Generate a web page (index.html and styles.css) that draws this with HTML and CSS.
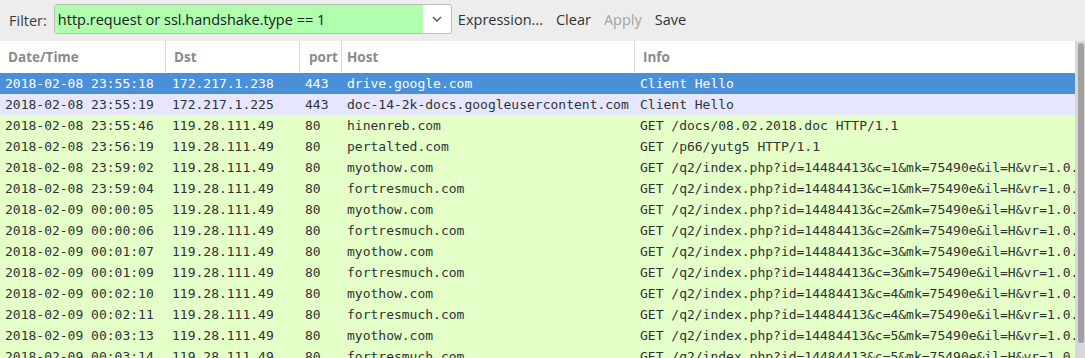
FILE: index.html
```html
<!DOCTYPE html>
<html lang="en">
  <head>
    <meta charset="UTF-8" />
    <title>Packet list</title>
    <link rel="stylesheet" href="styles.css">
  </head>
  <body>
    <div class="toolbar">
      <span class="filter-label">Filter:</span>
      <div class="filter-box">
        <input class="filter-input" type="text" value="http.request or ssl.handshake.type == 1" />
        <span class="filter-drop">
          <svg width="12" height="8" viewBox="0 0 12 8"><path d="M2 2 L6 6 L10 2" fill="none" stroke="#555" stroke-width="1.4"/></svg>
        </span>
      </div>
      <span class="tool-btn">Expression...</span>
      <span class="tool-btn">Clear</span>
      <span class="tool-btn disabled">Apply</span>
      <span class="tool-btn">Save</span>
    </div>

    <div class="list-wrap">
      <div class="packet-list">
        <div class="row head">
          <div class="c-time">Date/Time</div>
          <div class="c-dst">Dst</div>
          <div class="c-port">port</div>
          <div class="c-host">Host</div>
          <div class="c-info">Info</div>
        </div>
        <div id="rows"></div>
      </div>
      <div class="scrollbar"><div class="thumb"></div></div>
    </div>

    <script>
      // packet rows: [time, dst, port, host, info, kind]
      const q = (c) => `GET /q2/index.php?id=14484413&c=${c}&mk=75490e&il=H&vr=1.0.2`;
      const packets = [
        ["2018-02-08 23:55:18", "172.217.1.238", "443", "drive.google.com", "Client Hello", "selected"],
        ["2018-02-08 23:55:19", "172.217.1.225", "443", "doc-14-2k-docs.googleusercontent.com", "Client Hello", "ssl"],
        ["2018-02-08 23:55:46", "119.28.111.49", "80", "hinenreb.com", "GET /docs/08.02.2018.doc HTTP/1.1", "http"],
        ["2018-02-08 23:56:19", "119.28.111.49", "80", "pertalted.com", "GET /p66/yutg5 HTTP/1.1", "http"],
        ["2018-02-08 23:59:02", "119.28.111.49", "80", "myothow.com", q(1), "http"],
        ["2018-02-08 23:59:04", "119.28.111.49", "80", "fortresmuch.com", q(1), "http"],
        ["2018-02-09 00:00:05", "119.28.111.49", "80", "myothow.com", q(2), "http"],
        ["2018-02-09 00:00:06", "119.28.111.49", "80", "fortresmuch.com", q(2), "http"],
        ["2018-02-09 00:01:07", "119.28.111.49", "80", "myothow.com", q(3), "http"],
        ["2018-02-09 00:01:09", "119.28.111.49", "80", "fortresmuch.com", q(3), "http"],
        ["2018-02-09 00:02:10", "119.28.111.49", "80", "myothow.com", q(4), "http"],
        ["2018-02-09 00:02:11", "119.28.111.49", "80", "fortresmuch.com", q(4), "http"],
        ["2018-02-09 00:03:13", "119.28.111.49", "80", "myothow.com", q(5), "http"],
        ["2018-02-09 00:03:14", "119.28.111.49", "80", "fortresmuch.com", q(5), "http"]
      ];
      const cols = ["c-time", "c-dst", "c-port", "c-host", "c-info"];
      const rowsDiv = document.getElementById("rows");
      packets.forEach((p) => {
        const row = document.createElement("div");
        row.className = `row ${p[5]}`;
        cols.forEach((cls, i) => {
          const cell = document.createElement("div");
          cell.className = cls;
          cell.textContent = p[i];
          row.appendChild(cell);
        });
        rowsDiv.appendChild(row);
      });
    </script>
  </body>
</html>
```

FILE: styles.css
```css
body {
  margin: 0;
  background-color: #ededed;
  font-family: "Open Sans", "Noto Sans", sans-serif;
  color: #2e3436;
  overflow: hidden;
}

.toolbar {
  height: 41px;
  display: flex;
  align-items: center;
  padding-left: 9px;
  box-sizing: border-box;
  font-size: 14.5px;
}
.filter-label {
  margin-right: 7px;
  color: #3c3c3c;
}
.filter-box {
  display: flex;
  width: 398px;
  height: 30px;
  margin-top: -3px;
  border: 1px solid #bcbcb8;
  border-radius: 3px;
  box-sizing: border-box;
  overflow: hidden;
  background-color: #fff;
}
.filter-input {
  flex: 1;
  border: none;
  outline: none;
  background-color: #afffaf;
  font-family: "Open Sans", "Noto Sans", sans-serif;
  font-size: 14.5px;
  color: #1a1a1a;
  padding: 0 0 0 3px;
  margin: 0;
}
.filter-drop {
  width: 28px;
  display: flex;
  align-items: center;
  justify-content: center;
}
.tool-btn {
  margin-left: 6px;
  margin-right: 7px;
  margin-top: -3px;
  color: #2e3436;
}
.tool-btn:first-of-type {
  margin-left: 7px;
}
.tool-btn.disabled {
  color: #a3a3a3;
}

.list-wrap {
  display: flex;
  height: 317px;
  background-color: #fff;
}
.packet-list {
  width: 1075px;
  overflow: hidden;
}
.row {
  display: grid;
  grid-template-columns: 166px 134px 42px 293px 440px;
  height: 21px;
  line-height: 21px;
  font-family: "DejaVu Sans Mono", monospace;
  font-size: 13px;
  white-space: nowrap;
}
.row > div {
  overflow: hidden;
  padding-left: 5px;
}
.row .c-dst {
  padding-left: 6px;
}
.row.head {
  height: 32px;
  line-height: 32px;
  font-family: "Open Sans", "Noto Sans", sans-serif;
  font-size: 13.5px;
  font-weight: bold;
  color: #8a8a8a;
  background-color: #fff;
}
.row.head > div {
  border-right: 1px solid #dcdcdc;
  padding-left: 8px;
}
.row.head .c-port {
  padding-left: 9px;
  padding-right: 4px;
}
.row.head .c-host {
  padding-left: 5px;
}
.row.head .c-info {
  border-right: none;
}
.row.selected {
  background-color: #4a90d9;
  color: #fff;
}
.row.ssl {
  background-color: #e7e6ff;
}
.row.http {
  background-color: #e4ffc7;
}

.scrollbar {
  width: 10px;
  background-color: #d8d8d8;
  padding-top: 2px;
}
.scrollbar .thumb {
  width: 6px;
  height: 300px;
  margin-left: 3px;
  border-radius: 3px;
  background-color: #a0a0a0;
}
```
